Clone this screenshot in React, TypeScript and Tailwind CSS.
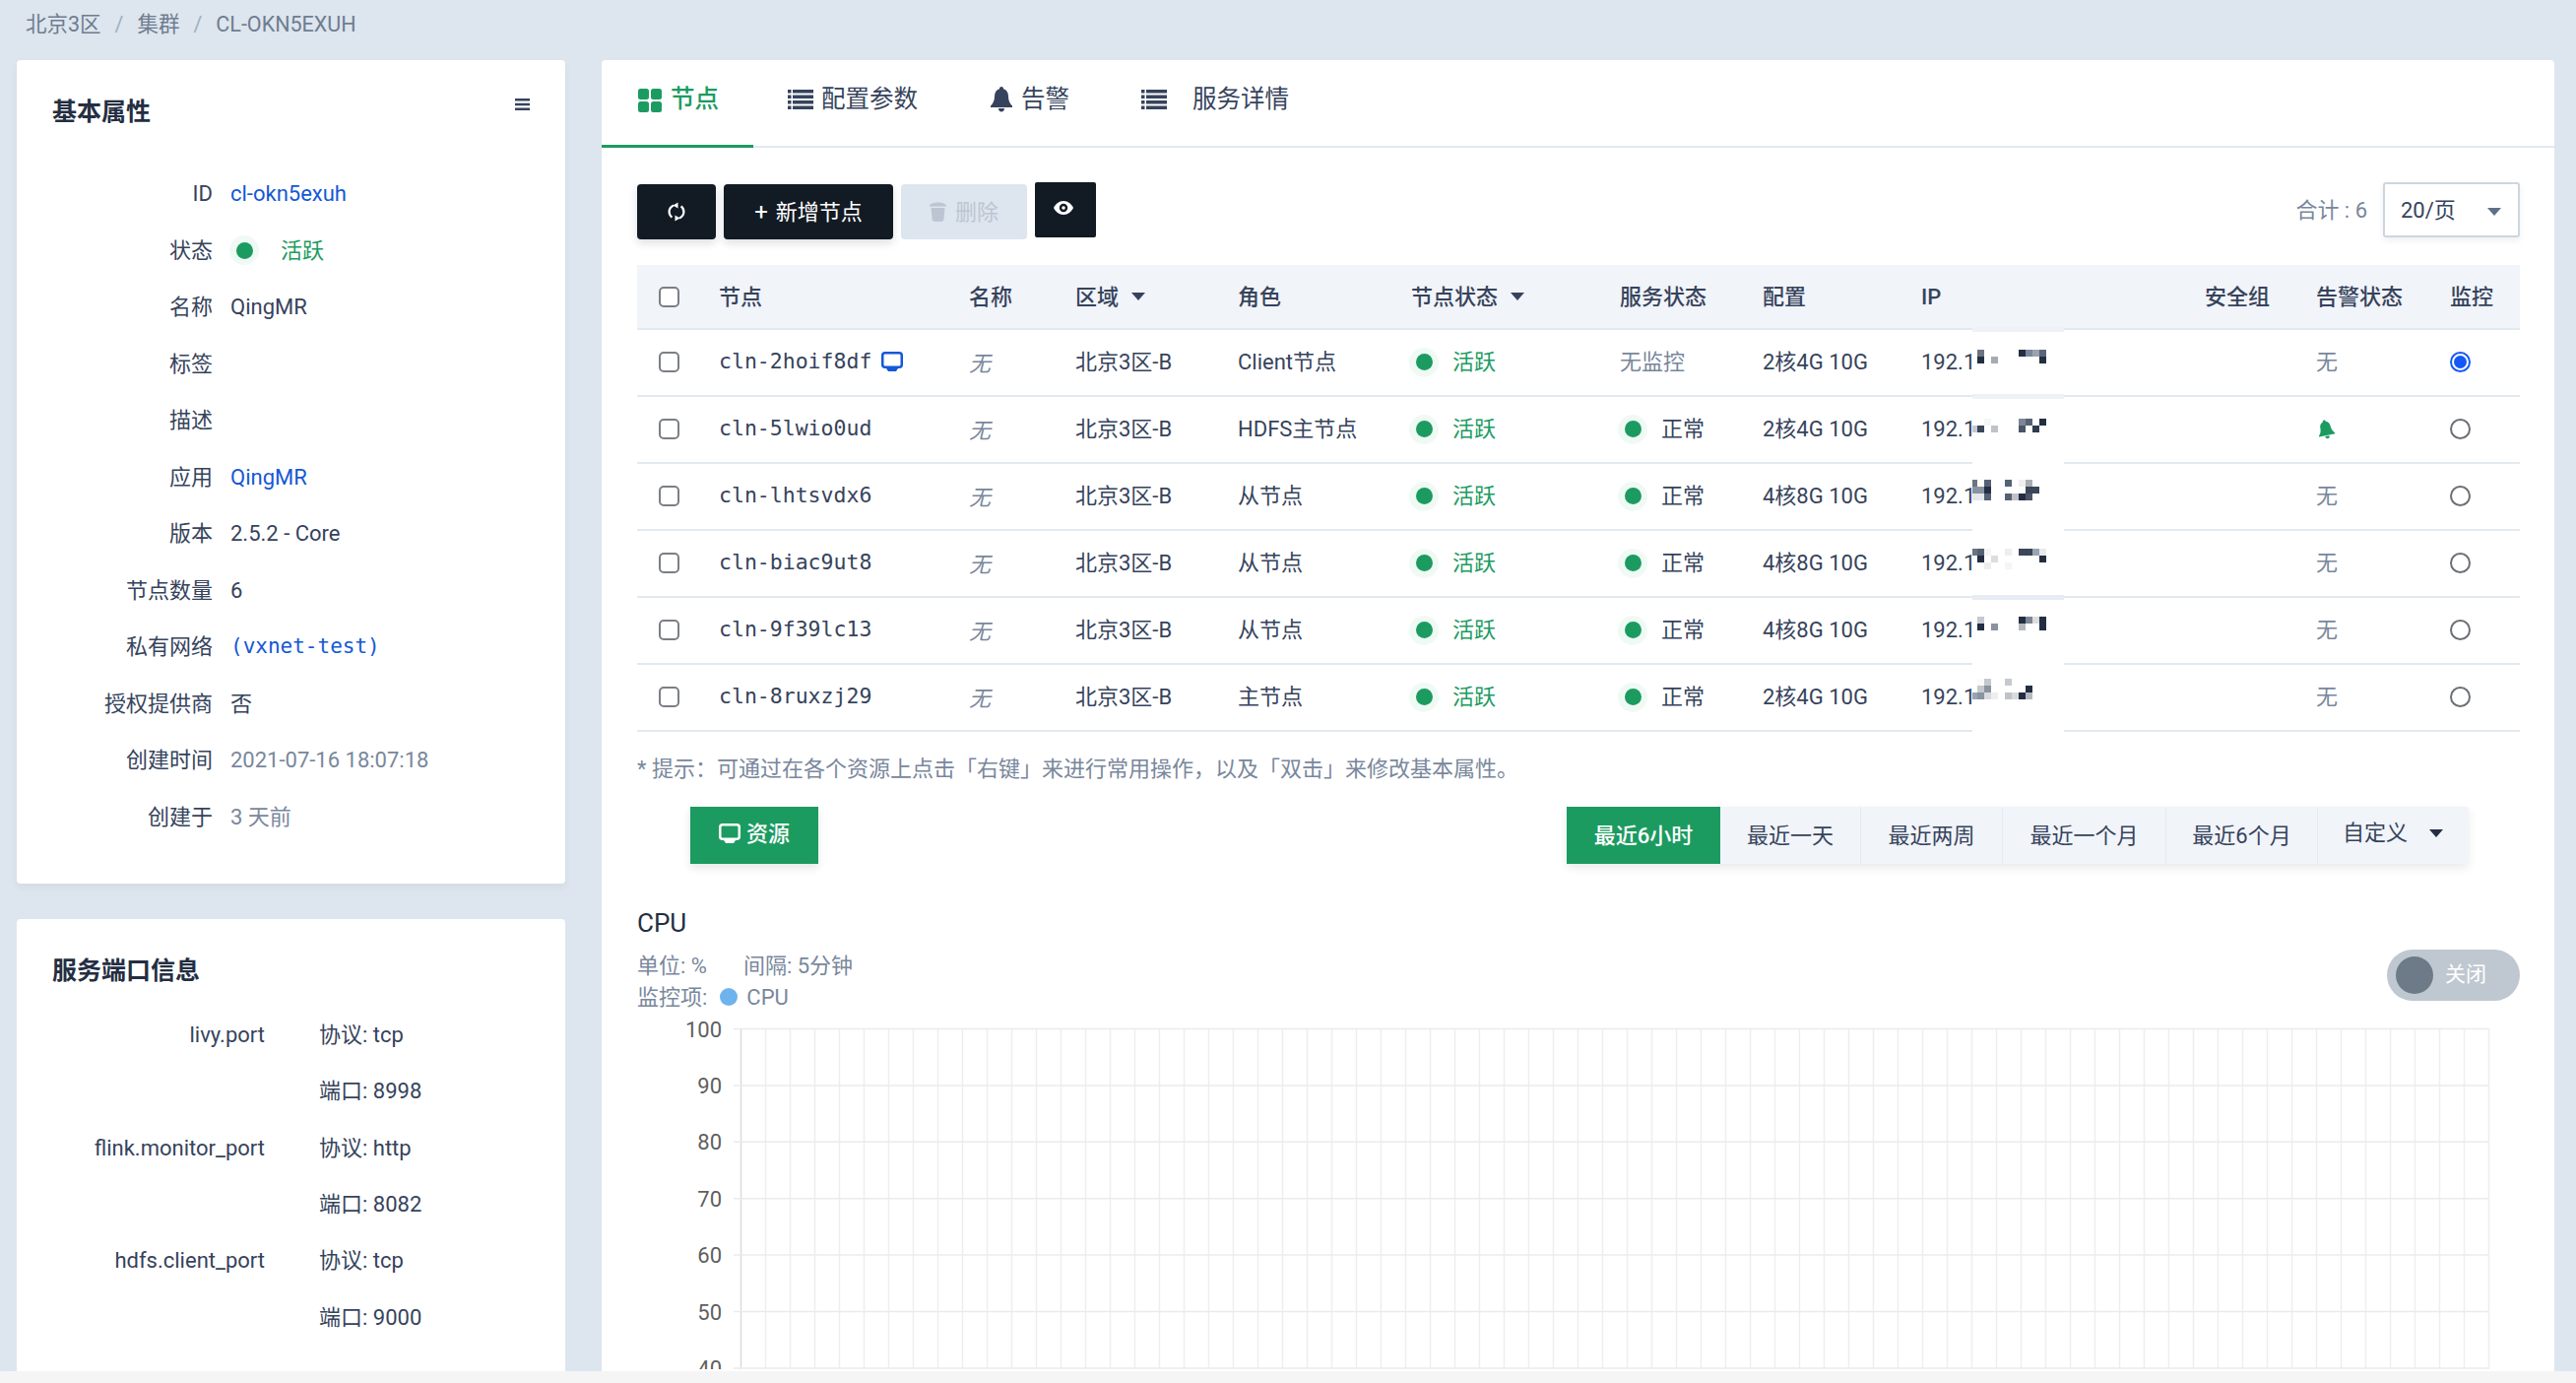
const GRID = 'grid grid-cols-[83px_254px_108px_165px_176px_212px_145px_161px_288px_113px_136px_71px] items-center'

const BASIC = [
  { label: 'ID', value: 'cl-okn5exuh', tone: 'text-[#1558d6]' },
  { label: '状态', status: true },
  { label: '名称', value: 'QingMR' },
  { label: '标签' },
  { label: '描述' },
  { label: '应用', value: 'QingMR', tone: 'text-[#1558d6]' },
  { label: '版本', value: '2.5.2 - Core' },
  { label: '节点数量', value: '6' },
  { label: '私有网络', value: '(vxnet-test)', tone: "text-[#1558d6] font-['DejaVu_Sans_Mono',monospace] text-[21px]" },
  { label: '授权提供商', value: '否' },
  { label: '创建时间', value: '2021-07-16 18:07:18', tone: 'text-[#79879c]' },
  { label: '创建于', value: '3 天前', tone: 'text-[#79879c]' },
]

const PORTS = [
  { name: 'livy.port', value: '协议: tcp' },
  { name: '', value: '端口: 8998' },
  { name: 'flink.monitor_port', value: '协议: http' },
  { name: '', value: '端口: 8082' },
  { name: 'hdfs.client_port', value: '协议: tcp' },
  { name: '', value: '端口: 9000' },
]

// mosaic cells are [col, line, colour], 7px each
type Cell = [number, number, string]

const NODES: {
  id: string
  role: string
  conf: string
  top: number
  band: string
  cells: Cell[]
}[] = [
  {
    id: 'cln-2hoif8df',
    role: 'Client节点',
    conf: '2核4G 10G',
    top: 23,
    band: 'bg-[#eef2f6]',
    cells: [
      [1, 0, '#6b7480'], [7, 0, '#242e42'], [8, 0, '#79879c'], [9, 0, '#9aa3b0'], [10, 0, '#59667a'],
      [1, 1, '#242e42'], [3, 1, '#a5abb3'], [10, 1, '#242e42'],
    ],
  },
  {
    id: 'cln-5lwio0ud',
    role: 'HDFS主节点',
    conf: '2核4G 10G',
    top: 25,
    band: 'bg-[#eef2f6]',
    cells: [
      [2, 0, '#f5f5f7'], [7, 0, '#7d8794'], [8, 0, '#566273'], [10, 0, '#242e42'],
      [0, 1, '#c5c9cf'], [1, 1, '#3b4658'], [3, 1, '#bfc3c8'], [7, 1, '#4a5566'], [9, 1, '#2f3a4d'],
    ],
  },
  {
    id: 'cln-lhtsvdx6',
    role: '从节点',
    conf: '4核8G 10G',
    top: 19,
    band: 'bg-white',
    cells: [
      [0, 0, '#6b7480'], [2, 0, '#566273'], [5, 0, '#566273'], [7, 0, '#eeeeee'], [8, 0, '#aaaeb4'],
      [0, 1, '#8a93a0'], [1, 1, '#8a93a0'], [2, 1, '#242e42'], [8, 1, '#3b4658'], [9, 1, '#3b4658'],
      [0, 2, '#e5e7ea'], [1, 2, '#e5e7ea'], [2, 2, '#566273'], [5, 2, '#566273'], [6, 2, '#bfc3c8'], [7, 2, '#242e42'], [8, 2, '#4a5566'],
    ],
  },
  {
    id: 'cln-biac9ut8',
    role: '从节点',
    conf: '4核8G 10G',
    top: 21,
    band: 'bg-white',
    cells: [
      [0, 0, '#6b7480'], [1, 0, '#566273'], [2, 0, '#f5f5f5'], [5, 0, '#eeeeee'], [7, 0, '#3b4658'], [8, 0, '#3b4658'], [9, 0, '#9aa3b0'], [10, 0, '#e8eaec'],
      [1, 1, '#242e42'], [3, 1, '#dddddd'], [10, 1, '#242e42'],
      [2, 2, '#eeeeee'], [5, 2, '#f5f5f5'],
    ],
  },
  {
    id: 'cln-9f39lc13',
    role: '从节点',
    conf: '4核8G 10G',
    top: 22,
    band: 'bg-[#e6ecf2]',
    cells: [
      [1, 0, '#c5c9cf'], [7, 0, '#242e42'], [8, 0, '#7d8794'], [9, 0, '#dddddd'], [10, 0, '#242e42'],
      [1, 1, '#242e42'], [3, 1, '#8a93a0'], [7, 1, '#b5b9bf'], [10, 1, '#242e42'],
    ],
  },
  {
    id: 'cln-8ruxzj29',
    role: '主节点',
    conf: '2核4G 10G',
    top: 17,
    band: 'bg-white',
    cells: [
      [1, 0, '#fafafa'], [2, 0, '#c5c9cf'], [5, 0, '#c5c9cf'],
      [1, 1, '#c5c9cf'], [2, 1, '#8a93a0'], [8, 1, '#242e42'],
      [0, 2, '#9aa3b0'], [1, 2, '#8a93a0'], [2, 2, '#d8dade'], [3, 2, '#eeeeee'], [5, 2, '#bfc3c8'], [6, 2, '#d8dade'], [7, 2, '#242e42'], [8, 2, '#b5b9bf'],
    ],
  },
]

const RANGES = [
  { label: '最近6小时', w: 'w-[156px]', on: true },
  { label: '最近一天', w: 'w-[143px]' },
  { label: '最近两周', w: 'w-[144px]' },
  { label: '最近一个月', w: 'w-[166px]' },
  { label: '最近6个月', w: 'w-[154px]' },
]

function GridIcon() {
  return (
    <svg width="24" height="24" viewBox="0 0 24 24" className="fill-current">
      <rect x="0" y="0" width="11" height="11" rx="2.5" />
      <rect x="13" y="0" width="11" height="11" rx="2.5" />
      <rect x="0" y="13" width="11" height="11" rx="2.5" />
      <rect x="13" y="13" width="11" height="11" rx="2.5" />
    </svg>
  )
}

function ListIcon() {
  return (
    <svg width="26" height="20" viewBox="0 0 26 20" className="fill-current">
      <rect x="0" y="0" width="3.5" height="3.5" />
      <rect x="5" y="0" width="21" height="3.5" />
      <rect x="0" y="5.5" width="3.5" height="3.5" />
      <rect x="5" y="5.5" width="21" height="3.5" />
      <rect x="0" y="11" width="3.5" height="3.5" />
      <rect x="5" y="11" width="21" height="3.5" />
      <rect x="0" y="16.5" width="3.5" height="3.5" />
      <rect x="5" y="16.5" width="21" height="3.5" />
    </svg>
  )
}

function BellIcon({ className }: { className?: string }) {
  return (
    <svg width="24" height="26" viewBox="0 0 24 26" className={className}>
      <path
        className="fill-current"
        d="M12 0c1.2 0 2 .9 2 2.2 3.4 1 5 4 5 7.6 0 4.600 1.700 7.400 4 9.800v1.400H1v-1.400c2.300-2.400 4-5.200 4-9.800 0-3.600 1.600-6.600 5-7.600C10 .9 10.800 0 12 0zM9 22h6c0 2-1.300 3.500-3 3.500S9 24 9 22z"
      />
    </svg>
  )
}

function MonitorIcon({ className }: { className?: string }) {
  return (
    <svg width="22" height="21" viewBox="0 0 22 21" className={className}>
      <rect x="1.250" y="1.250" width="19.500" height="14.500" rx="2.500" fill="none" stroke="currentColor" strokeWidth="2.500" />
      <path className="fill-current" d="M5 17h12l-2 3H7z" />
    </svg>
  )
}

function RefreshIcon() {
  return (
    <svg width="18" height="20" viewBox="0 0 18 20" fill="none" stroke="white" strokeWidth="2.200">
      <path d="M6 3.500C3 5 1.600 7.500 1.600 10c0 2.200 1 4.200 2.800 5.600" />
      <path d="M12 16.500c3-1.500 4.400-4 4.400-6.500 0-2.200-1-4.200-2.800-5.600" />
      <path d="M10.500 0.500v6l-5-3z" fill="white" stroke="none" />
      <path d="M7.500 19.500v-6l5 3z" fill="white" stroke="none" />
    </svg>
  )
}

function Dot() {
  return (
    <span className="flex size-[30px] shrink-0 items-center justify-center rounded-full bg-[#f0faf5]">
      <span className="size-[17px] rounded-full bg-[#1c9b61]" />
    </span>
  )
}

function Status({ text, tone, gap }: { text: string; tone: string; gap: string }) {
  return (
    <div className="flex items-center">
      <Dot />
      <span className={`${gap} ${tone}`}>{text}</span>
    </div>
  )
}

function Check() {
  return <span className="ml-[22px] block size-[21px] rounded-[5px] border-2 border-[#7b7f85] bg-white" />
}

function Radio({ on }: { on?: boolean }) {
  if (on) {
    return (
      <span className="flex size-[21px] items-center justify-center rounded-full border-2 border-[#1558f6]">
        <span className="size-[13px] rounded-full bg-[#1558f6]" />
      </span>
    )
  }
  return <span className="block size-[21px] rounded-full border-2 border-[#6b6f75]" />
}

function Caret({ className }: { className: string }) {
  return <span className={`inline-block border-x-[7px] border-t-[8px] border-x-transparent ${className}`} />
}

function Mosaic({ top, cells, band }: { top: number; cells: Cell[]; band: string }) {
  return (
    <div className="absolute left-[1356px] top-[-3px] h-[71px] w-[93px] bg-white">
      <div className={`h-[5px] ${band}`} />
      <svg width="93" height="66" viewBox="0 0 93 66" className="absolute left-0 top-0">
        {cells.map(([c, l, fill]) => (
          <rect key={`${c}-${l}`} x={c * 7 - 2} y={top + l * 7} width="7" height="7" fill={fill} />
        ))}
      </svg>
    </div>
  )
}

function NodeRow({ node, index }: { node: (typeof NODES)[number]; index: number }) {
  return (
    <div className={`${GRID} relative h-[68px] border-b-2 border-[#e3e9f0] pb-[1px]`}>
      <Check />
      <div className="flex items-center gap-[10px]">
        <span className="font-['DejaVu_Sans_Mono',monospace] text-[21.500px] text-[#36435c]">{node.id}</span>
        {index === 0 && <MonitorIcon className="text-[#1558d6]" />}
      </div>
      <span className="font-['Noto_Sans_CJK_SC',sans-serif] italic text-[#79879c]">无</span>
      <span>北京3区-B</span>
      <span>{node.role}</span>
      <div className="-ml-[2px]">
        <Status text="活跃" tone="text-[#1c9b61]" gap="ml-[14px]" />
      </div>
      {index === 0 ? (
        <span className="text-[#79879c]">无监控</span>
      ) : (
        <div className="-ml-[2px]">
          <Status text="正常" tone="text-[#36435c]" gap="ml-[14px]" />
        </div>
      )}
      <span>{node.conf}</span>
      <span>192.168</span>
      <span />
      {index === 1 ? (
        <BellIcon className="ml-[1px] w-[18px] -rotate-12 text-[#1c9b61]" />
      ) : (
        <span className="text-[#79879c]">无</span>
      )}
      <Radio on={index === 0} />
      <Mosaic top={node.top} cells={node.cells} band={node.band} />
    </div>
  )
}

function Chart() {
  const ticks = [100, 90, 80, 70, 60, 50, 40]
  const cols = Array.from({ length: 72 }, (_, i) => 105 + i * 25)
  return (
    <svg width="1912" height="360" viewBox="0 0 1912 360" className="block">
      {cols.map((x, i) => (
        <line key={x} x1={x + 0.5} x2={x + 0.5} y1="14" y2="360" stroke={i === 0 ? '#dcdcdc' : '#eeeeee'} strokeWidth="1.500" />
      ))}
      {ticks.map((t, i) => (
        <g key={t}>
          <line x1="98" x2="1880" y1={14.5 + i * 57.4} y2={14.5 + i * 57.4} stroke="#ebebeb" strokeWidth="1.500" />
          <text x="86" y={22.5 + i * 57.4} textAnchor="end" fontSize="22" fill="#5f5f5f" fontFamily="Roboto, sans-serif">
            {t}
          </text>
        </g>
      ))}
    </svg>
  )
}

export default function App() {
  return (
    <div className="flex h-[1404px] w-[2616px] flex-col overflow-hidden bg-[#f5f5f5] font-[Roboto,'Noto_Sans_CJK_SC',sans-serif] text-[22px] text-[#36435c]">
      <div className="h-[1392px] shrink-0 overflow-hidden bg-[#dde5ee]">
        <div className="flex h-[61px] items-start pl-[26px] pt-[9px] text-[21.500px] text-[#6f7d90]">
          <span>北京3区</span>
          <span className="mx-[14px] text-[#9fb0c4]">/</span>
          <span>集群</span>
          <span className="mx-[14px] text-[#9fb0c4]">/</span>
          <span>CL-OKN5EXUH</span>
        </div>

        <div className="flex items-start gap-[37px] pl-[17px]">
          <aside className="w-[557px] shrink-0">
            <section className="h-[836px] rounded-[4px] bg-white px-[36px] pt-[36px] shadow-[0_4px_8px_rgba(36,46,66,0.05)]">
              <div className="flex items-start justify-between">
                <h2 className="text-[25px] font-bold leading-[34px] text-[#242e42]">基本属性</h2>
                <svg width="15" height="12" viewBox="0 0 15 12" className="mt-[3px]">
                  <path d="M0 0h15v2.500H0zM0 4.700h15v2.500H0zM0 9.400h15V12H0z" fill="#36435c" />
                </svg>
              </div>
              <div className="mt-[37px]">
                {BASIC.map((row) => (
                  <div key={row.label} className="flex h-[57.500px] items-center">
                    <span className="w-[163px] shrink-0 text-right">{row.label}</span>
                    <div className={`ml-[18px] ${row.tone ?? ''}`}>
                      {row.status ? (
                        <div className="-ml-[1px]">
                          <Status text="活跃" tone="text-[#1c9b61]" gap="ml-[22px]" />
                        </div>
                      ) : (
                        row.value
                      )}
                    </div>
                  </div>
                ))}
              </div>
            </section>

            <section className="mt-[36px] h-[600px] rounded-[4px] bg-white pl-[36px] pt-[36px]">
              <h2 className="text-[25px] font-bold leading-[34px] text-[#242e42]">服务端口信息</h2>
              <div className="mt-[19px]">
                {PORTS.map((p) => (
                  <div key={p.value + p.name} className="flex h-[57.300px] items-center">
                    <span className="w-[216px] shrink-0 text-right">{p.name}</span>
                    <span className="ml-[55px]">{p.value}</span>
                  </div>
                ))}
              </div>
            </section>
          </aside>

          <main className="h-[1400px] w-[1983px] shrink-0 rounded-[4px] bg-white">
            <nav className="flex h-[89px] items-stretch border-b-2 border-[#e3e9f0] text-[24.500px]">
              <div className="flex w-[154px] items-center justify-center gap-[9px] border-b-[3px] border-[#1c9b61] pb-[5px] pl-[2px] -mb-[2px] font-medium text-[#1c9b61]">
                <GridIcon />
                <span>节点</span>
              </div>
              <div className="ml-[35px] flex items-center gap-[8px] pb-[7px]">
                <ListIcon />
                <span>配置参数</span>
              </div>
              <div className="ml-[73px] flex items-center gap-[8px] pb-[7px]">
                <BellIcon />
                <span>告警</span>
              </div>
              <div className="ml-[73px] flex items-center gap-[26px] pb-[7px]">
                <ListIcon />
                <span>服务详情</span>
              </div>
            </nav>

            <div className="px-[36px] pr-[35px]">
              <div className="mt-[35px] flex h-[58px] items-start justify-between">
                <div className="flex items-start pt-[2px]">
                  <button className="flex h-[56px] w-[80px] items-center justify-center rounded-[4px] bg-[#121a23] shadow-[0_4px_8px_rgba(36,46,66,0.15)]">
                    <RefreshIcon />
                  </button>
                  <button className="ml-[8px] flex h-[56px] w-[172px] items-center justify-center gap-[8px] rounded-[4px] bg-[#121a23] text-white shadow-[0_4px_8px_rgba(36,46,66,0.15)]">
                    <span className="text-[24px] leading-none">+</span>
                    <span>新增节点</span>
                  </button>
                  <button className="ml-[8px] flex h-[56px] w-[128px] items-center justify-center gap-[9px] rounded-[4px] bg-[#dde5ee] text-[#bcc6d2]">
                    <svg width="17" height="20" viewBox="0 0 17 20" fill="#bcc6d2">
                      <path d="M0 3.500C1 1.500 5 .5 8.500.5s7.500 1 8.500 3v1H0zM1.500 6h14l-1.200 12.500c-.1 1-3 1.500-5.800 1.500s-5.700-.5-5.800-1.500z" />
                    </svg>
                    <span>删除</span>
                  </button>
                  <button className="ml-[8px] -mt-[2px] flex h-[56px] w-[62px] items-center justify-center rounded-[2px] bg-[#121a23] pb-[4px] pr-[4px]">
                    <svg width="20" height="14" viewBox="0 0 20 14">
                      <path d="M10 0c4.500 0 8 3 10 7-2 4-5.500 7-10 7S2 11 0 7c2-4 5.500-7 10-7z" fill="white" />
                      <circle cx="10" cy="7" r="4.200" fill="#121a23" />
                      <circle cx="10" cy="7" r="1.800" fill="white" />
                    </svg>
                  </button>
                </div>
                <div className="flex items-center">
                  <span className="text-[#79879c]">合计 : 6</span>
                  <div className="ml-[16px] flex h-[56px] w-[139px] items-center justify-between rounded-[3px] border-2 border-[#cdd6e0] pl-[16px] pr-[17px] shadow-[0_3px_6px_rgba(36,46,66,0.08)]">
                    <span>20/页</span>
                    <Caret className="mt-[3px] border-t-[#5f6f85]" />
                  </div>
                </div>
              </div>

              <div className="mt-[26px]">
                <div className={`${GRID} h-[66px] border-b-2 border-[#e3e9f0] bg-[#f1f4f9] font-medium`}>
                  <Check />
                  <span>节点</span>
                  <span>名称</span>
                  <span className="flex items-center gap-[13px]">
                    区域
                    <Caret className="border-t-[#36435c]" />
                  </span>
                  <span>角色</span>
                  <span className="flex items-center gap-[13px]">
                    节点状态
                    <Caret className="border-t-[#36435c]" />
                  </span>
                  <span>服务状态</span>
                  <span>配置</span>
                  <span>IP</span>
                  <span>安全组</span>
                  <span>告警状态</span>
                  <span>监控</span>
                </div>
                {NODES.map((n, i) => (
                  <NodeRow key={n.id} node={n} index={i} />
                ))}
              </div>

              <p className="mt-[23px] leading-[30px] text-[#79879c]">
                * 提示：可通过在各个资源上点击「右键」来进行常用操作，以及「双击」来修改基本属性。
              </p>

              <div className="mt-[23px] flex items-start justify-between pl-[54px] pr-[52px]">
                <button className="flex h-[58px] w-[130px] items-center justify-center gap-[6px] bg-[#1c9b61] pb-[4px] font-medium text-white shadow-[0_4px_8px_rgba(36,46,66,0.12)]">
                  <MonitorIcon className="text-white" />
                  <span>资源</span>
                </button>
                <div className="flex h-[58px] rounded-[3px] bg-[#f1f4f9] shadow-[0_4px_8px_rgba(36,46,66,0.1)]">
                  {RANGES.map((r) => (
                    <div
                      key={r.label}
                      className={`flex items-center justify-center ${r.w} ${r.on ? 'bg-[#1c9b61] font-medium text-white' : 'border-r border-[#e6ebf1]'}`}
                    >
                      {r.label}
                    </div>
                  ))}
                  <div className="flex w-[153px] items-center gap-[22px] pb-[5px] pl-[25px]">
                    <span>自定义</span>
                    <Caret className="border-t-[#242e42]" />
                  </div>
                </div>
              </div>

              <div className="relative mt-[40px]">
                <h3 className="text-[26px] leading-[40px] text-[#242e42]">CPU</h3>
                <div className="mt-[7px] flex h-[32px] items-center gap-[37px] text-[#79879c]">
                  <span>单位: %</span>
                  <span>间隔: 5分钟</span>
                </div>
                <div className="flex h-[32px] items-center text-[#79879c]">
                  <span>监控项:</span>
                  <span className="ml-[13px] size-[18px] rounded-full bg-[#6fb3ee]" />
                  <span className="ml-[9px]">CPU</span>
                </div>
                <div className="absolute right-0 top-[47px] flex h-[52px] w-[135px] items-center rounded-full bg-[#bfc8d0] pl-[9px] text-[21px] text-white">
                  <span className="size-[38px] rounded-full bg-[#6d7b88]" />
                  <span className="ml-[12px]">关闭</span>
                </div>
                <div className="mt-[2px]">
                  <Chart />
                </div>
              </div>
            </div>
          </main>
        </div>
      </div>
    </div>
  )
}
